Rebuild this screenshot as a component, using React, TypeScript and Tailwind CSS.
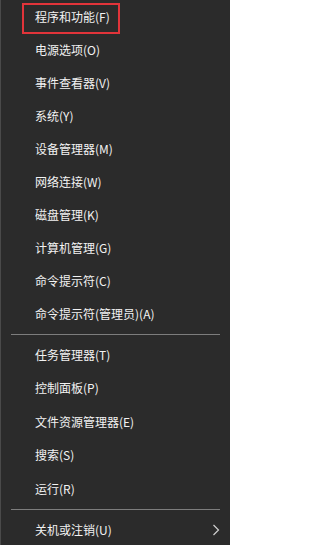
import React from 'react';

const groups: string[][] = [
  [
    '程序和功能(F)',
    '电源选项(O)',
    '事件查看器(V)',
    '系统(Y)',
    '设备管理器(M)',
    '网络连接(W)',
    '磁盘管理(K)',
    '计算机管理(G)',
    '命令提示符(C)',
    '命令提示符(管理员)(A)',
  ],
  ['任务管理器(T)', '控制面板(P)', '文件资源管理器(E)', '搜索(S)', '运行(R)'],
];

function Separator() {
  return (
    <div className="h-[8px] flex items-center px-[10px]">
      <div className="h-px w-full bg-[#7d7d7d]" />
    </div>
  );
}

function Item({ label, submenu, tall }: { label: string; submenu?: boolean; tall?: boolean }) {
  return (
    <div
      className={`${tall ? 'h-[33.5px]' : 'h-[33px]'} flex items-center justify-between pl-[34px] pr-[10px] text-[12px] text-[#f2f2f2]`}
    >
      <span>{label}</span>
      {submenu && (
        <svg width="8" height="12" viewBox="0 0 8 12" className="text-[#d0d0d0]">
          <polyline points="1.5,1 6.5,6 1.5,11" fill="none" stroke="currentColor" strokeWidth="1.2" />
        </svg>
      )}
    </div>
  );
}

export default function App() {
  return (
    <div
      className="relative w-[230px] h-[545px] overflow-hidden bg-[#2b2b2b] border-l border-[#4a4a4a]"
      style={{ fontFamily: '"Noto Sans CJK SC", "Noto Sans", sans-serif' }}
    >
      {groups[0].map(l => (
        <Item key={l} label={l} />
      ))}
      <Separator />
      {groups[1].map(l => (
        <Item key={l} label={l} tall />
      ))}
      <Separator />
      <Item label="关机或注销(U)" submenu />

      {/* red highlight box */}
      <div className="absolute left-[21px] top-[3px] w-[98px] h-[31px] border-2 border-[#e1343a]" />
    </div>
  );
}
